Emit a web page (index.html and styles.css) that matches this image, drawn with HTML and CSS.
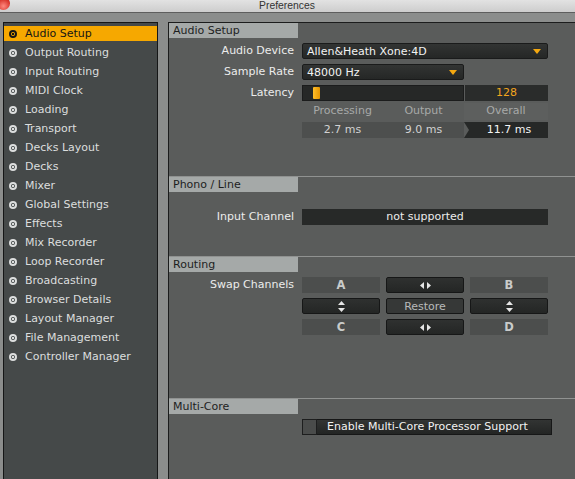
FILE: index.html
```html
<!DOCTYPE html>
<html lang="en">
<head>
    <meta charset="UTF-8">
    <link rel="stylesheet" href="styles.css">
</head>
<body>
    <div class="titlebar">
        <div class="close-btn"></div>
        <div class="title">Preferences</div>
        <div></div>
    </div>

    <div class="window">
        <ul class="sidebar">
            <li class="item active"><span class="dot"></span>Audio Setup</li>
            <li class="item"><span class="dot"></span>Output Routing</li>
            <li class="item"><span class="dot"></span>Input Routing</li>
            <li class="item"><span class="dot"></span>MIDI Clock</li>
            <li class="item"><span class="dot"></span>Loading</li>
            <li class="item"><span class="dot"></span>Transport</li>
            <li class="item"><span class="dot"></span>Decks Layout</li>
            <li class="item"><span class="dot"></span>Decks</li>
            <li class="item"><span class="dot"></span>Mixer</li>
            <li class="item"><span class="dot"></span>Global Settings</li>
            <li class="item"><span class="dot"></span>Effects</li>
            <li class="item"><span class="dot"></span>Mix Recorder</li>
            <li class="item"><span class="dot"></span>Loop Recorder</li>
            <li class="item"><span class="dot"></span>Broadcasting</li>
            <li class="item"><span class="dot"></span>Browser Details</li>
            <li class="item"><span class="dot"></span>Layout Manager</li>
            <li class="item"><span class="dot"></span>File Management</li>
            <li class="item"><span class="dot"></span>Controller Manager</li>
        </ul>

        <div class="panel">
            <!-- Audio Setup -->
            <div class="section audio">
                <div class="sec-title">Audio Setup</div>
                <div class="row">
                    <div class="label">Audio Device</div>
                    <div class="select wide"><span>Allen&amp;Heath Xone:4D</span><span class="caret"></span></div>
                </div>
                <div class="row">
                    <div class="label">Sample Rate</div>
                    <div class="select narrow"><span>48000 Hz</span><span class="caret"></span></div>
                </div>
                <div class="row">
                    <div class="label">Latency</div>
                    <div class="latency">
                        <div class="slider"><div class="handle"></div></div>
                        <div class="lat-value">128</div>
                    </div>
                </div>
                <div class="row tight">
                    <div class="label"></div>
                    <div class="stats">
                        <div class="stat-label">Processing</div>
                        <div class="stat-label">Output</div>
                        <div class="stat-label overall">Overall</div>
                    </div>
                </div>
                <div class="row tight">
                    <div class="label"></div>
                    <div class="stats">
                        <div class="stat">2.7 ms</div>
                        <div class="stat">9.0 ms</div>
                        <div class="stat total">11.7 ms</div>
                    </div>
                </div>
            </div>

            <!-- Phono / Line -->
            <div class="section phono">
                <div class="sec-title">Phono / Line</div>
                <div class="row input-row">
                    <div class="label">Input Channel</div>
                    <div class="field">not supported</div>
                </div>
            </div>

            <!-- Routing -->
            <div class="section routing">
                <div class="sec-title">Routing</div>
                <div class="row">
                    <div class="label">Swap Channels</div>
                    <div class="swap-grid">
                        <div class="deck">A</div>
                        <div class="btn">
                            <svg width="11" height="7" viewBox="0 0 11 7"><polygon points="4,0 4,7 0,3.5" fill="#e6e6e6"/><polygon points="7,0 7,7 11,3.5" fill="#e6e6e6"/></svg>
                        </div>
                        <div class="deck">B</div>

                        <div class="btn">
                            <svg width="7" height="11" viewBox="0 0 7 11"><polygon points="0,4 7,4 3.5,0" fill="#e6e6e6"/><polygon points="0,7 7,7 3.5,11" fill="#e6e6e6"/></svg>
                        </div>
                        <div class="btn restore">Restore</div>
                        <div class="btn">
                            <svg width="7" height="11" viewBox="0 0 7 11"><polygon points="0,4 7,4 3.5,0" fill="#e6e6e6"/><polygon points="0,7 7,7 3.5,11" fill="#e6e6e6"/></svg>
                        </div>

                        <div class="deck">C</div>
                        <div class="btn">
                            <svg width="11" height="7" viewBox="0 0 11 7"><polygon points="4,0 4,7 0,3.5" fill="#e6e6e6"/><polygon points="7,0 7,7 11,3.5" fill="#e6e6e6"/></svg>
                        </div>
                        <div class="deck">D</div>
                    </div>
                </div>
            </div>

            <!-- Multi-Core -->
            <div class="section multicore">
                <div class="sec-title">Multi-Core</div>
                <div class="row">
                    <div class="label"></div>
                    <div class="checkbox-btn">
                        <div class="check"></div>
                        <div class="check-text">Enable Multi-Core Processor Support</div>
                    </div>
                </div>
            </div>
        </div>
    </div>
</body>
</html>
```

FILE: styles.css
```css
* {
    margin: 0;
    padding: 0;
    box-sizing: border-box;
}

body {
    width: 575px;
    height: 479px;
    overflow: hidden;
    background: #8b8d8c;
    font-family: "DejaVu Sans", sans-serif;
    font-size: 11px;
}

.titlebar {
    height: 13px;
    display: grid;
    grid-template-columns: 1fr auto 1fr;
    align-items: center;
    background: linear-gradient(#e2e2e2, #cdcdcd);
    border-bottom: 1px solid #5e5e5e;
    overflow: hidden;
}

.close-btn {
    width: 13px;
    height: 13px;
    margin-left: -3px;
    margin-top: -6px;
    border-radius: 50%;
    background: radial-gradient(circle at 50% 70%, #ff8a80, #d8362c 60%, #a31e17);
}

.title {
    font-family: "Liberation Sans", sans-serif;
    font-size: 11.5px;
    color: #333;
    line-height: 12px;
    margin-top: -2px;
    transform: scaleX(0.9);
}

.window {
    display: flex;
    gap: 10px;
    padding: 9px 0 0 3px;
    height: 466px;
}

/* sidebar */

.sidebar {
    list-style: none;
    width: 155px;
    background: #454949;
    border: 1px solid #151616;
    border-bottom: none;
    padding-top: 3px;
}

.item {
    display: flex;
    align-items: center;
    gap: 8px;
    height: 15px;
    margin-bottom: 4px;
    padding-left: 5px;
    color: #dcdede;
}

.item.active {
    background: #f6a800;
    color: #151515;
}

.dot {
    width: 8px;
    height: 8px;
    border: 2px solid currentColor;
    border-radius: 50%;
    background: radial-gradient(circle, currentColor 0 0.9px, transparent 1.3px);
}

/* main panel */

.panel {
    flex: 1;
    background: #5a5c5b;
    border-top: 1px solid #1b1c1c;
    border-left: 1px solid #1b1c1c;
    display: flex;
    flex-direction: column;
}

.section {
    border-top: 1px solid #909291;
}

.section.audio {
    border-top: none;
    height: 153px;
}

.section.phono {
    height: 80px;
}

.section.routing {
    height: 142px;
}

.section.multicore {
    flex: 1;
}

.sec-title {
    width: 129px;
    height: 15px;
    line-height: 15px;
    padding-left: 4px;
    background: #a5a9a8;
    color: #1d1e1e;
}

.row {
    display: flex;
    gap: 8px;
    margin-top: 5px;
}

.row.tight {
    margin-top: 0;
}

.label {
    width: 125px;
    text-align: right;
    color: #ececec;
    line-height: 16px;
}

.select {
    height: 16px;
    display: flex;
    align-items: center;
    justify-content: space-between;
    padding: 0 6px 0 4px;
    background: linear-gradient(#323433, #252726);
    border: 1px solid #1a1b1b;
    border-radius: 2px;
    color: #f2f2f2;
}

.select.wide {
    width: 246px;
}

.select.narrow {
    width: 162px;
}

.caret {
    width: 0;
    height: 0;
    border-left: 4.5px solid transparent;
    border-right: 4.5px solid transparent;
    border-top: 5px solid #f4a810;
}

.latency {
    display: flex;
    gap: 1px;
    width: 246px;
}

.slider {
    width: 162px;
    height: 16px;
    display: flex;
    align-items: center;
    background: #262827;
    border: 1px solid #1b1c1c;
}

.handle {
    width: 7px;
    height: 12px;
    margin-left: 10px;
    border-radius: 1px;
    background: linear-gradient(90deg, #ffbe2a, #e59500);
}

.lat-value {
    flex: 1;
    height: 16px;
    line-height: 16px;
    text-align: center;
    background: #2a2c2b;
    color: #f2a51e;
}

.stats {
    display: flex;
    width: 246px;
}

.stat-label,
.stat {
    width: 81px;
    text-align: center;
}

.stat-label {
    height: 21px;
    line-height: 20px;
    color: #a7a9a8;
}

.stat-label.overall,
.stat.total {
    width: 84px;
}

.stat-label.overall {
    height: 17px;
    line-height: 16px;
    margin-top: 2px;
    background: #5d5f5e;
}

.stat {
    height: 16px;
    line-height: 16px;
    background: #4d4f4e;
    color: #d2d2d2;
}

.stat.total {
    background: #262827;
    color: #f4f4f4;
    padding-left: 6px;
    clip-path: polygon(0 0, 100% 0, 100% 100%, 0 100%, 5px 50%);
}

.row.input-row {
    margin-top: 17px;
}

.field {
    width: 246px;
    height: 16px;
    line-height: 16px;
    text-align: center;
    background: #272928;
    color: #ececec;
}

.swap-grid {
    display: grid;
    grid-template-columns: repeat(3, 78px);
    grid-auto-rows: 16px;
    column-gap: 6px;
    row-gap: 5px;
}

.deck {
    display: flex;
    align-items: center;
    justify-content: center;
    background: #4c4e4d;
    color: #c9cbca;
    font-weight: bold;
    font-size: 11.5px;
}

.btn {
    display: flex;
    align-items: center;
    justify-content: center;
    background: linear-gradient(#2f3130, #242625);
    border: 1px solid #161717;
    border-radius: 2px;
}

.btn.restore {
    background: #363837;
    color: #b8baba;
}

.checkbox-btn {
    display: flex;
    width: 250px;
    height: 16px;
}

.check {
    width: 15px;
    height: 16px;
    background: #4a4c4b;
    border: 1px solid #1d1e1e;
}

.check-text {
    flex: 1;
    padding-left: 10px;
    line-height: 14px;
    color: #f2f2f2;
    background: linear-gradient(#323433, #232524);
    border: 1px solid #161717;
    border-left: none;
}
```
